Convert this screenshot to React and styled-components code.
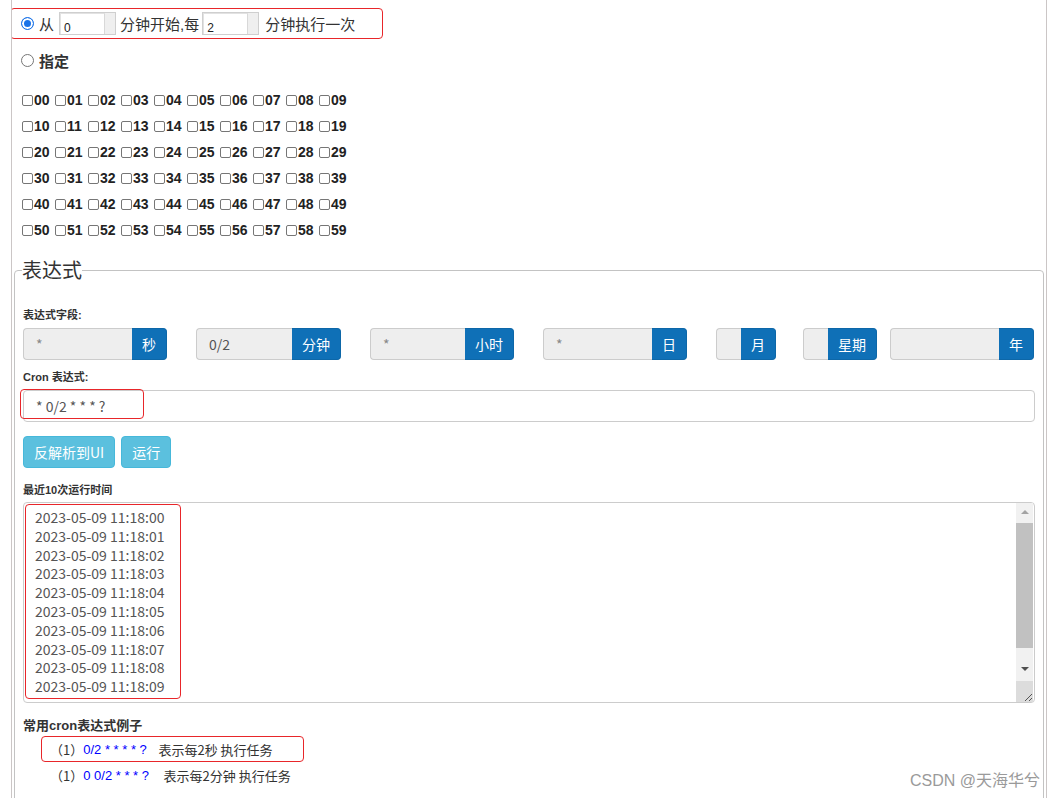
import React from 'react'
import styled, { createGlobalStyle } from 'styled-components'

const GlobalStyle = createGlobalStyle`
  html, body {
    margin:0;
    padding:0;
    background:#fff;
  }
  body{
    font-family:"Liberation Sans", "Noto Sans CJK SC", sans-serif;
    font-size:14px;
    color:#333;
  }
`

const Page = styled.div`
  position:relative;
  box-sizing:border-box;
  height:798px;
  overflow:hidden;
  margin:0 8px 0 11px;
  padding-top:8px;
  border-left:1px solid #cbc6c6;
  border-right:1px solid #cbc6c6;
`

const MarkedRow = styled.div`
  display:flex;
  align-items:center;
  box-sizing:border-box;
  width:373px;
  height:31px;
  margin-left:-2px;
  padding-left:10px;
  border:1px solid #e8262a;
  border-radius:4px;
  font-size:15px;
`

const ChoiceRow = styled.div`
  display:flex;
  align-items:center;
  height:20px;
  margin-top:11px;
  padding-left:9px;
  font-size:15px;
  font-weight:bold;
`

const Radio = styled.input.attrs({ type:'radio' })`
  appearance:none;
  box-sizing:border-box;
  width:13px;
  height:13px;
  margin:0 5px 0 0;
  border:1px solid #767676;
  border-radius:50%;
  background:#fff;
  &:checked{
    border:1.5px solid #1a73e8;
    background:#1a73e8;
    box-shadow:inset 0 0 0 2px #fff;
  }
`

const SpinBox = styled.span`
  display:inline-flex;
  box-sizing:border-box;
  width:57px;
  height:23px;
  margin:0 ${p => p.$right}px 0 ${p => p.$left}px;
  border:1px solid #cfcfcf;
  background:#efefef;
`

const SpinField = styled.span`
  box-sizing:border-box;
  width:45px;
  padding:7px 0 0 3px;
  background:#fff;
  border-right:1px solid #d8d8d8;
  border-top:1px solid #e2e2e2;
  border-left:1px solid #e2e2e2;
  font-size:12px;
  line-height:14px;
  color:#222;
`

const CheckGrid = styled.div`
  margin-top:17px;
  padding-left:10px;
`

const CheckRow = styled.div`
  display:flex;
  align-items:center;
  height:26px;
`

const CheckItem = styled.label`
  display:flex;
  align-items:center;
  width:33px;
  font-size:14px;
  font-weight:bold;
  color:#222;
`

const Box = styled.input.attrs({ type:'checkbox' })`
  appearance:none;
  box-sizing:border-box;
  width:11px;
  height:11px;
  margin:0 1px 0 0;
  border:1px solid #767676;
  border-radius:2px;
  background:#fff;
`

const Fieldset = styled.fieldset`
  margin:15px 2px 0;
  padding:0 8px 30px;
  border:1px solid #c3c3c3;
  border-radius:4px;
`

const Legend = styled.legend`
  margin-left:-1px;
  padding:0;
  font-family:"Noto Sans CJK SC", sans-serif;
  font-size:20px;
  font-weight:normal;
  line-height:24px;
  color:#333;
`

const Label = styled.div`
  margin-top:${p => p.$top}px;
  margin-bottom:${p => p.$bottom || 5}px;
  font-size:11px;
  font-weight:bold;
  line-height:15px;
  color:#333;
`

const FieldGrid = styled.div`
  display:grid;
  grid-template-columns:173px 174px 173px 173px 87px 87px 144px;
  height:32px;
`

const FieldGroup = styled.div`
  display:flex;
  width:${p => p.$w}px;
  height:32px;
`

const FieldInput = styled.input`
  flex:1;
  min-width:0;
  box-sizing:border-box;
  height:32px;
  padding:0 12px;
  border:1px solid #ccc;
  border-right:0;
  border-radius:4px 0 0 4px;
  background:#eee;
  font:14px "Noto Sans CJK SC", sans-serif;
  color:#555;
  outline:none;
  &::placeholder{
    color:#888;
  }
`

const Addon = styled.span`
  display:flex;
  align-items:center;
  padding:0 10px;
  background:#0f70b7;
  border:1px solid #0d67a8;
  border-left:0;
  border-radius:0 4px 4px 0;
  font-family:"Noto Sans CJK SC", sans-serif;
  font-size:14px;
  color:#fff;
`

const CronBox = styled.div`
  position:relative;
  display:flex;
  align-items:center;
  box-sizing:border-box;
  height:32px;
  padding:0 12px;
  border:1px solid #ccc;
  border-radius:4px;
  font-family:"Noto Sans CJK SC", sans-serif;
  font-size:14px;
  color:#555;
`

const CronMark = styled.span`
  position:absolute;
  left:-4px;
  top:-2px;
  width:122px;
  height:28px;
  border:1px solid #e8262a;
  border-radius:4px;
`

const ButtonBar = styled.div`
  display:flex;
  gap:6px;
  margin-top:14px;
`

const InfoButton = styled.button`
  height:32px;
  padding:0 10px;
  background:#5bc0de;
  border:1px solid #46b8da;
  border-radius:4px;
  font-family:"Noto Sans CJK SC", sans-serif;
  font-size:14px;
  color:#fff;
`

const LogBox = styled.div`
  display:flex;
  box-sizing:border-box;
  height:201px;
  border:1px solid #ccc;
  border-radius:4px;
  background:#fff;
`

const LogLines = styled.div`
  box-sizing:border-box;
  width:156px;
  height:195px;
  margin:1px;
  padding:3px 0 0 9px;
  border:1px solid #e8262a;
  border-radius:4px;
  font-family:"Noto Sans CJK SC", sans-serif;
  font-size:14px;
  line-height:18.8px;
  color:#555;
`

const ScrollBar = styled.div`
  display:flex;
  flex-direction:column;
  width:17px;
  margin:0 1px 0 auto;
  background:#f1f1f1;
`

const ScrollBtn = styled.div`
  display:flex;
  align-items:center;
  justify-content:center;
  height:17px;
  &::before{
    content:'';
    border-left:4px solid transparent;
    border-right:4px solid transparent;
    ${p => p.$down
      ? 'border-top:4px solid #505050;'
      : 'border-bottom:4px solid #a3a3a3;'}
  }
`

const Thumb = styled.div`
  height:125px;
  margin-top:3px;
  background:#c1c1c1;
`

const Track = styled.div`
  flex:1;
`

const Corner = styled.div`
  display:flex;
  align-items:flex-end;
  justify-content:flex-end;
  height:21px;
  margin-top:4px;
  background:#dcdcdc;
`

const ExampleTitle = styled.div`
  margin-top:14px;
  font-size:13px;
  font-weight:bold;
  line-height:17px;
  color:#333;
`

const ExampleList = styled.div`
  margin-top:2px;
  padding-left:18px;
`

const Example = styled.div`
  display:flex;
  align-items:center;
  box-sizing:border-box;
  width:263px;
  height:26px;
  padding-left:8px;
  border:1px solid ${p => (p.$marked ? '#e8262a' : 'transparent')};
  border-radius:4px;
  font-family:"Noto Sans CJK SC", sans-serif;
  font-size:13px;
  color:#333;
  white-space:pre;
`

const Expr = styled.span`
  font-family:"Liberation Sans", sans-serif;
  color:#0000ff;
`

const Watermark = styled.div`
  position:absolute;
  right:6px;
  top:767px;
  font-family:"Liberation Sans", "Noto Sans CJK SC", sans-serif;
  font-size:16px;
  color:#9a9a9a;
`

const fields = [
  { name:'秒', w:144, ph:'*' },
  { name:'分钟', w:145, value:'0/2' },
  { name:'小时', w:144, ph:'*' },
  { name:'日', w:144, ph:'*' },
  { name:'月', w:60 },
  { name:'星期', w:74 },
  { name:'年', w:144 },
]

const rows = [0, 1, 2, 3, 4, 5]
const cols = [0, 1, 2, 3, 4, 5, 6, 7, 8, 9]

const times = cols.map(i => `2023-05-09 11:18:0${i}`)

const App = () => {
  return (
    <>
      <GlobalStyle />
      <Page>
        <MarkedRow>
          <Radio name="minute" defaultChecked />
          从
          <SpinBox $left={5} $right={4}><SpinField>0</SpinField></SpinBox>
          分钟开始,每
          <SpinBox $left={3} $right={6}><SpinField>2</SpinField></SpinBox>
          分钟执行一次
        </MarkedRow>

        <ChoiceRow>
          <Radio name="minute" />
          指定
        </ChoiceRow>

        <CheckGrid>
          {rows.map(r => (
            <CheckRow key={r}>
              {cols.map(c => (
                <CheckItem key={c}>
                  <Box />
                  {`${r}${c}`}
                </CheckItem>
              ))}
            </CheckRow>
          ))}
        </CheckGrid>

        <Fieldset>
          <Legend>表达式</Legend>
          <Label $top={26}>表达式字段:</Label>
          <FieldGrid>
            {fields.map(f => (
              <FieldGroup key={f.name} $w={f.w}>
                <FieldInput readOnly placeholder={f.ph} defaultValue={f.value} />
                <Addon>{f.name}</Addon>
              </FieldGroup>
            ))}
          </FieldGrid>

          <Label $top={10}>Cron 表达式:</Label>
          <CronBox>
            * 0/2 * * * ?
            <CronMark />
          </CronBox>

          <ButtonBar>
            <InfoButton>反解析到UI</InfoButton>
            <InfoButton>运行</InfoButton>
          </ButtonBar>

          <Label $top={15} $bottom={4}>最近10次运行时间</Label>
          <LogBox>
            <LogLines>
              {times.map(t => <div key={t}>{t}</div>)}
            </LogLines>
            <ScrollBar>
              <ScrollBtn />
              <Thumb />
              <Track />
              <ScrollBtn $down />
              <Corner>
                <svg width="10" height="10" viewBox="0 0 10 10">
                  <path d="M9 2 L2 9 M9 6 L6 9" stroke="#555" strokeWidth="1" fill="none" />
                </svg>
              </Corner>
            </ScrollBar>
          </LogBox>

          <ExampleTitle>常用cron表达式例子</ExampleTitle>
          <ExampleList>
            <Example $marked>
              （1）<Expr>{'0/2 * * * * ?'}</Expr>{'\u00a0\u00a0\u00a0\u00a0'}表示每2秒 执行任务
            </Example>
            <Example>
              （1）<Expr>{'0 0/2 * * * ?'}</Expr>{'\u00a0\u00a0\u00a0\u00a0\u00a0'}表示每2分钟 执行任务
            </Example>
          </ExampleList>
        </Fieldset>

        <Watermark>CSDN @天海华兮</Watermark>
      </Page>
    </>
  )
}

export default App
